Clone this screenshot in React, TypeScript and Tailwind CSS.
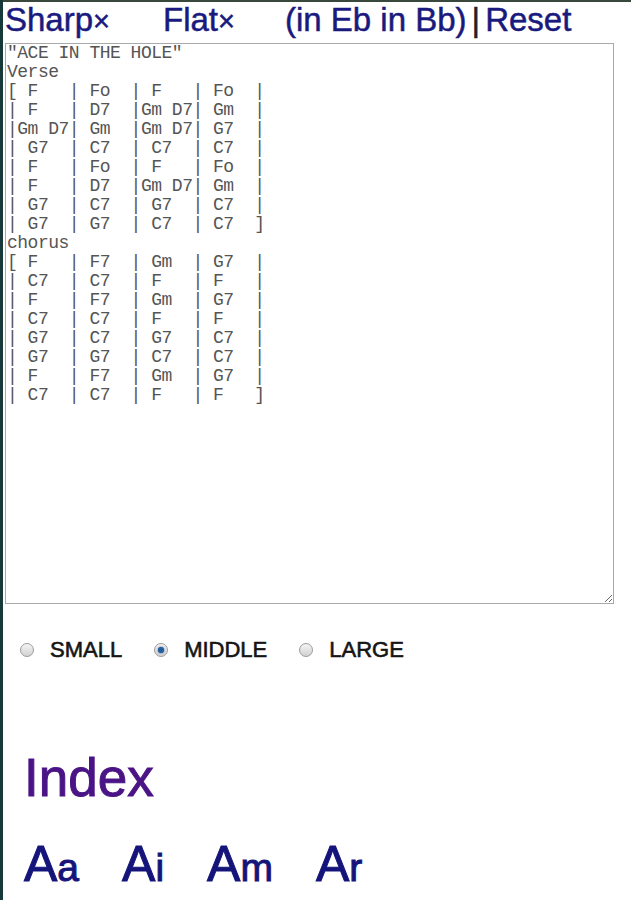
const chart = `"ACE IN THE HOLE"
Verse
[ F   | Fo  | F   | Fo  |
| F   | D7  |Gm D7| Gm  |
|Gm D7| Gm  |Gm D7| G7  |
| G7  | C7  | C7  | C7  |
| F   | Fo  | F   | Fo  |
| F   | D7  |Gm D7| Gm  |
| G7  | C7  | G7  | C7  |
| G7  | G7  | C7  | C7  ]
chorus
[ F   | F7  | Gm  | G7  |
| C7  | C7  | F   | F   |
| F   | F7  | Gm  | G7  |
| C7  | C7  | F   | F   |
| G7  | C7  | G7  | C7  |
| G7  | G7  | C7  | C7  |
| F   | F7  | Gm  | G7  |
| C7  | C7  | F   | F   ]`;

const sizes = ['SMALL', 'MIDDLE', 'LARGE'];

function Radio({ on }: { on: boolean }) {
  return (
    <span className="relative inline-block w-[14px] h-[14px] rounded-full border border-[#9a9a9a] bg-gradient-to-b from-[#f4f4f4] to-[#d2d2d2]">
      {on && (
        <span className="absolute left-[3px] top-[3px] w-[6px] h-[6px] rounded-full bg-[#1f5f9e] shadow-[0_0_2px_#1c4f86]" />
      )}
    </span>
  );
}

export default function App() {
  const sans = "font-['Liberation_Sans',Arial,sans-serif]";
  return (
    <div className={`flex min-h-[900px] bg-white ${sans}`}>
      <div className="w-[3px] bg-[#17393a] shrink-0" />
      <div className="flex-1 flex flex-col">
        <div className="h-[2px] bg-[#38483c]" />
        <div className="h-[41px] pl-[2px] leading-[36px] text-[33px] text-[#1a1a7e] whitespace-nowrap flex [-webkit-text-stroke:0.5px_#1a1a7e]">
          <span>Sharp<span className="text-[29px]">×</span></span>
          <span className="ml-[53px]">Flat<span className="text-[29px]">×</span></span>
          <span className="ml-[50px]">(in Eb in Bb)</span>
          <span className="ml-[5px] text-[#222] [-webkit-text-stroke:0.5px_#222]">|</span>
          <span className="ml-[5px]">Reset</span>
        </div>
        <div className="pl-[2px]">
          <textarea
            readOnly
            value={chart}
            className="block w-[609px] h-[561px] border border-[#a9a9a9] pl-[1px] pt-0 font-['Liberation_Mono',monospace] text-[18px] tracking-[-0.5px] leading-[19px] text-[#555] whitespace-pre outline-none"
          />
        </div>
        <div className="mt-[34px] ml-[17px] flex items-center gap-[32px] h-[24px]">
          {sizes.map((s) => (
            <label key={s} className="flex items-center gap-[16px]">
              <Radio on={s === 'MIDDLE'} />
              <span className="text-[22px] text-[#151515] leading-[24px] [-webkit-text-stroke:0.6px_#151515]">{s}</span>
            </label>
          ))}
        </div>
        <div className="mt-[91px] ml-[21px] text-[53px] leading-[50px] text-[#4a1486] [-webkit-text-stroke:1px_#4a1486]">Index</div>
        <div className="mt-[36px] ml-[21px] flex gap-[43px] text-[#14147a] leading-[50px] [-webkit-text-stroke:1px_#14147a]">
          {['a', 'i', 'm', 'r'].map((c) => (
            <span key={c}>
              <span className="text-[50px]">A</span>
              <span className="text-[39px]">{c}</span>
            </span>
          ))}
        </div>
      </div>
    </div>
  );
}
